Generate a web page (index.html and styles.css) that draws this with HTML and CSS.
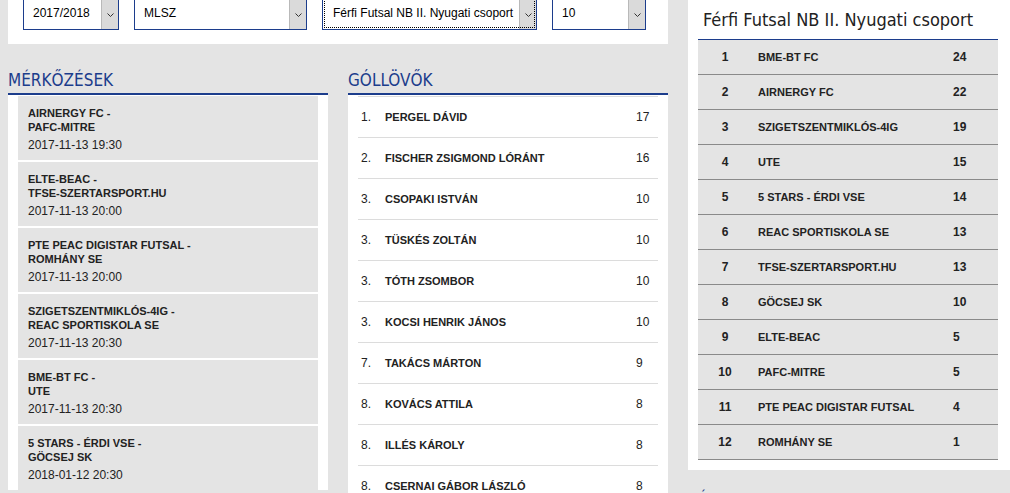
FILE: index.html
```html
<!DOCTYPE html>
<html lang="hu">

<head>
    <meta charset="UTF-8">
    <meta name="viewport" content="width=device-width, initial-scale=1.0" />
    <title>Futsal - Férfi NB II. Nyugati csoport</title>
    <link rel="stylesheet" href="styles.css">
</head>

<body>
    <div class="page">
        <div class="main">
            <!-- Filters -->
            <div class="filters">
                <div class="select select-season">
                    <span class="value">2017/2018</span>
                    <span class="arrow"><svg width="7" height="4" viewBox="0 0 7 4"><path d="M0.5 0.5 L3.5 3.5 L6.5 0.5" fill="none" stroke="#333" stroke-width="1" /></svg></span>
                </div>
                <div class="select select-org">
                    <span class="value">MLSZ</span>
                    <span class="arrow"><svg width="7" height="4" viewBox="0 0 7 4"><path d="M0.5 0.5 L3.5 3.5 L6.5 0.5" fill="none" stroke="#333" stroke-width="1" /></svg></span>
                </div>
                <div class="select select-league focused">
                    <span class="value">Férfi Futsal NB II. Nyugati csoport</span>
                    <span class="arrow"><svg width="7" height="4" viewBox="0 0 7 4"><path d="M0.5 0.5 L3.5 3.5 L6.5 0.5" fill="none" stroke="#333" stroke-width="1" /></svg></span>
                </div>
                <div class="select select-round">
                    <span class="value">10</span>
                    <span class="arrow"><svg width="7" height="4" viewBox="0 0 7 4"><path d="M0.5 0.5 L3.5 3.5 L6.5 0.5" fill="none" stroke="#333" stroke-width="1" /></svg></span>
                </div>
            </div>

            <div class="columns">
                <!-- Matches -->
                <section>
                    <h2 class="section-title">MÉRKŐZÉSEK</h2>
                    <div class="panel">
                        <div class="match">
                            <div class="teams">AIRNERGY FC -<br>PAFC-MITRE</div>
                            <div class="date">2017-11-13 19:30</div>
                        </div>
                        <div class="match">
                            <div class="teams">ELTE-BEAC -<br>TFSE-SZERTARSPORT.HU</div>
                            <div class="date">2017-11-13 20:00</div>
                        </div>
                        <div class="match">
                            <div class="teams">PTE PEAC DIGISTAR FUTSAL -<br>ROMHÁNY SE</div>
                            <div class="date">2017-11-13 20:00</div>
                        </div>
                        <div class="match">
                            <div class="teams">SZIGETSZENTMIKLÓS-4IG -<br>REAC SPORTISKOLA SE</div>
                            <div class="date">2017-11-13 20:30</div>
                        </div>
                        <div class="match">
                            <div class="teams">BME-BT FC -<br>UTE</div>
                            <div class="date">2017-11-13 20:30</div>
                        </div>
                        <div class="match">
                            <div class="teams">5 STARS - ÉRDI VSE -<br>GÖCSEJ SK</div>
                            <div class="date">2018-01-12 20:30</div>
                        </div>
                    </div>
                </section>

                <!-- Top scorers -->
                <section>
                    <h2 class="section-title">GÓLLÖVŐK</h2>
                    <div class="panel">
                        <div class="scorer"><span>1.</span><span class="name">PERGEL DÁVID</span><span>17</span></div>
                        <div class="scorer"><span>2.</span><span class="name">FISCHER ZSIGMOND LÓRÁNT</span><span>16</span></div>
                        <div class="scorer"><span>3.</span><span class="name">CSOPAKI ISTVÁN</span><span>10</span></div>
                        <div class="scorer"><span>3.</span><span class="name">TÜSKÉS ZOLTÁN</span><span>10</span></div>
                        <div class="scorer"><span>3.</span><span class="name">TÓTH ZSOMBOR</span><span>10</span></div>
                        <div class="scorer"><span>3.</span><span class="name">KOCSI HENRIK JÁNOS</span><span>10</span></div>
                        <div class="scorer"><span>7.</span><span class="name">TAKÁCS MÁRTON</span><span>9</span></div>
                        <div class="scorer"><span>8.</span><span class="name">KOVÁCS ATTILA</span><span>8</span></div>
                        <div class="scorer"><span>8.</span><span class="name">ILLÉS KÁROLY</span><span>8</span></div>
                        <div class="scorer"><span>8.</span><span class="name">CSERNAI GÁBOR LÁSZLÓ</span><span>8</span></div>
                    </div>
                </section>
            </div>
        </div>

        <!-- Standings -->
        <aside class="side">
            <div class="standings-card">
                <div class="standings-title">Férfi Futsal NB II. Nyugati csoport</div>
                <table class="standings">
                    <colgroup>
                        <col class="col-rank">
                        <col class="col-team">
                        <col class="col-points">
                    </colgroup>
                    <tbody>
                        <tr><td class="rank">1</td><td>BME-BT FC</td><td class="points">24</td></tr>
                        <tr><td class="rank">2</td><td>AIRNERGY FC</td><td class="points">22</td></tr>
                        <tr><td class="rank">3</td><td>SZIGETSZENTMIKLÓS-4IG</td><td class="points">19</td></tr>
                        <tr><td class="rank">4</td><td>UTE</td><td class="points">15</td></tr>
                        <tr><td class="rank">5</td><td>5 STARS - ÉRDI VSE</td><td class="points">14</td></tr>
                        <tr><td class="rank">6</td><td>REAC SPORTISKOLA SE</td><td class="points">13</td></tr>
                        <tr><td class="rank">7</td><td>TFSE-SZERTARSPORT.HU</td><td class="points">13</td></tr>
                        <tr><td class="rank">8</td><td>GÖCSEJ SK</td><td class="points">10</td></tr>
                        <tr><td class="rank">9</td><td>ELTE-BEAC</td><td class="points">5</td></tr>
                        <tr><td class="rank">10</td><td>PAFC-MITRE</td><td class="points">5</td></tr>
                        <tr><td class="rank">11</td><td>PTE PEAC DIGISTAR FUTSAL</td><td class="points">4</td></tr>
                        <tr><td class="rank">12</td><td>ROMHÁNY SE</td><td class="points">1</td></tr>
                    </tbody>
                </table>
            </div>
            <h2 class="section-title side-title">ÉVAD STATISZTIKA</h2>
        </aside>
    </div>
</body>

</html>
```

FILE: styles.css
```css
html,
body {
    overflow: hidden;
}

body {
    margin: 0;
    background-color: #e4e4e4;
    font-family: "Liberation Sans", Arial, sans-serif;
    color: #222;
}

.page {
    display: flex;
    align-items: flex-start;
    gap: 20px;
    padding: 0 8px;
    margin-top: -10px; /* page is scrolled a little */
}

.main {
    width: 660px;
    flex-shrink: 0;
}

/* Filter bar */
.filters {
    display: flex;
    gap: 15px;
    padding: 7px 15px 14px;
    background-color: #fff;
}

.select {
    display: flex;
    height: 33px;
    box-sizing: border-box;
    border: 1px solid #1c3d8c;
    background-color: #fff;
}

.select-season { width: 96px; }
.select-org { width: 173px; }
.select-league { width: 215px; }
.select-round { width: 94px; }

.select .value {
    flex: 1;
    padding-left: 9px;
    font-size: 12px;
    line-height: 31px;
    color: #000;
    white-space: nowrap;
    overflow: hidden;
}

.select .arrow {
    display: flex;
    align-items: center;
    justify-content: center;
    width: 17px;
    box-sizing: border-box;
    padding-top: 2px;
    background-color: #dadada;
    border-left: 1px solid #b9b9b9;
}

.select.focused {
    outline: 1px dotted #000;
    outline-offset: -3px;
}

.select.focused .value {
    padding-left: 10px;
}

/* Section headings */
.section-title {
    margin: 20px 0 0;
    padding-top: 3px;
    font-family: "DejaVu Sans Condensed", "DejaVu Sans", sans-serif;
    font-stretch: condensed;
    font-size: 17px;
    font-weight: normal;
    line-height: 26px;
    color: #1c3d8c;
    border-bottom: 2px solid #1c3d8c;
}

.columns {
    display: grid;
    grid-template-columns: 320px 320px;
    gap: 20px;
}

.panel {
    padding: 1px 10px 0;
    background-color: #fff;
}

/* Matches */
.match {
    height: 64px;
    box-sizing: border-box;
    margin-bottom: 2px;
    padding: 10px 10px 0;
    background-color: #e4e4e4;
}

.teams {
    font-size: 11px;
    font-weight: bold;
    line-height: 14px;
}

.date {
    margin-top: 4px;
    font-size: 12px;
    line-height: 14px;
}

/* Scorers */
.scorer {
    display: grid;
    grid-template-columns: 24px 1fr 22px;
    align-items: center;
    height: 40px;
    padding-left: 3px;
    border-top: 1px solid #dcdcdc;
    font-size: 12px;
}

.scorer .name {
    font-size: 11px;
    font-weight: bold;
}

/* Standings */
.side {
    width: 322px;
    flex-shrink: 0;
}

.standings-card {
    padding: 10px 12px 10px 10px;
    background-color: #fff;
}

.standings-title {
    padding-left: 5px;
    font-family: "DejaVu Sans Condensed", "DejaVu Sans", sans-serif;
    font-stretch: condensed;
    font-size: 18px;
    line-height: 39px;
    color: #222;
    border-bottom: 1px solid #1c3d8c;
}

.standings {
    width: 300px;
    table-layout: fixed;
    border-collapse: separate;
    border-spacing: 0;
}

.col-rank { width: 54px; }
.col-team { width: 195px; }
.col-points { width: 51px; }

.standings td {
    height: 34px;
    padding: 0 0 0 6px;
    background-color: #e4e4e4;
    border-bottom: 1px solid #8a8a8a;
    font-size: 11px;
    font-weight: bold;
    white-space: nowrap;
}

.standings td.rank {
    padding: 0;
    text-align: center;
    font-size: 12px;
}

.standings td.points {
    font-size: 12px;
}

.side-title {
    margin-top: 14px;
    padding-left: 10px;
    border-bottom: none;
}
```
